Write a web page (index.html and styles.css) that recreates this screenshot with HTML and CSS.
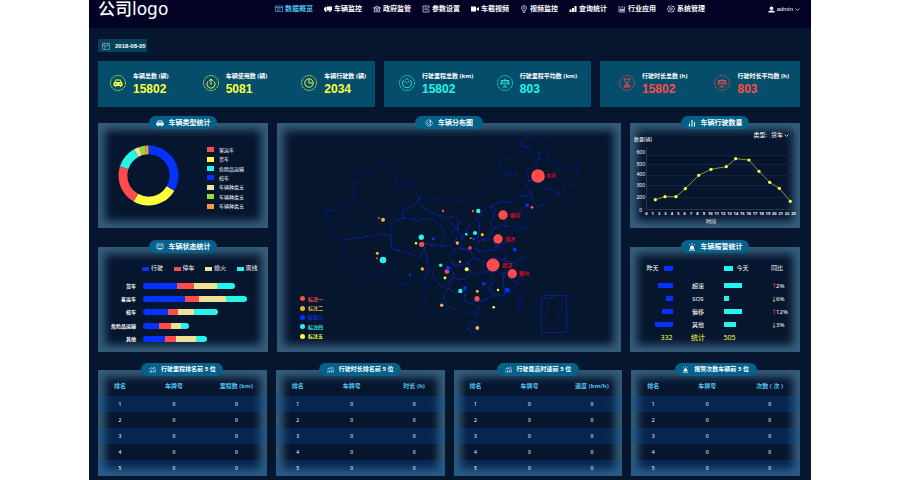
FILE: index.html
```html
<!DOCTYPE html>
<html lang="zh-CN">
<head>
	<title>数据概览</title>
	<meta charset="UTF-8">
	<link rel="stylesheet" href="styles.css">
</head>
<body>
<!-- icons -->
<svg class="sprite" aria-hidden="true">
	<symbol id="i-board" viewBox="0 0 16 16"><path d="M1 2h14v11H1zM1 5h14M4 8h8M4 10.500h5" fill="none" stroke="currentColor" stroke-width="1.300"/></symbol>
	<symbol id="i-truck" viewBox="0 0 16 16"><path d="M6 3h10v8H6zM0 7l2-3h3v7H0z" fill="currentColor"/><circle cx="3.500" cy="12" r="1.800" fill="currentColor"/><circle cx="12" cy="12" r="1.800" fill="currentColor"/></symbol>
	<symbol id="i-bank" viewBox="0 0 16 16"><path d="M1 6l7-4 7 4zM3 7v5M6.500 7v5M9.500 7v5M13 7v5M1 13.500h14" fill="none" stroke="currentColor" stroke-width="1.400"/></symbol>
	<symbol id="i-edit" viewBox="0 0 16 16"><path d="M14 9v5H2V2h12v4M5 6h6M5 9h3M8 11l5-4" fill="none" stroke="currentColor" stroke-width="1.300"/></symbol>
	<symbol id="i-video" viewBox="0 0 16 16"><path d="M0 3h10v10H0zM11 7l5-3v8l-5-3z" fill="currentColor"/></symbol>
	<symbol id="i-cam" viewBox="0 0 16 16"><path d="M8 1a5 5 0 0 1 3 9l-1 2H6l-1-2a5 5 0 0 1 3-9zM5 14.500h6" fill="none" stroke="currentColor" stroke-width="1.300"/><circle cx="8" cy="6" r="2" fill="none" stroke="currentColor"/></symbol>
	<symbol id="i-bars" viewBox="0 0 16 16"><path d="M1 9h4v5H1zM6 6h4v8H6zM11 2h4v12h-4z" fill="currentColor"/></symbol>
	<symbol id="i-app" viewBox="0 0 16 16"><path d="M2 2v12h13M5 8h2v4H5zM9 8h2v4H9zM13 3v9M5 4h6" fill="none" stroke="currentColor" stroke-width="1.300"/></symbol>
	<symbol id="i-gear" viewBox="0 0 16 16"><path d="M8 1l2 2 3-.5.5 3L15.500 8l-2 2.500-.5 3-3-.5-2 2-2-2-3 .5-.5-3L.5 8l2-2.500.5-3 3 .5z" fill="none" stroke="currentColor" stroke-width="1.400"/><circle cx="8" cy="8" r="2.500" fill="none" stroke="currentColor" stroke-width="1.400"/></symbol>
	<symbol id="i-user" viewBox="0 0 16 16"><circle cx="8" cy="5" r="4" fill="currentColor"/><path d="M1 15v-3l4-2h6l4 2v3z" fill="currentColor"/></symbol>
	<symbol id="i-down" viewBox="0 0 16 16"><path d="M2 5l6 6 6-6" fill="none" stroke="currentColor" stroke-width="2.500"/></symbol>
	<symbol id="i-date" viewBox="0 0 16 16"><path d="M1 3h14v12H1zM1 7h14M4.500 1v4M11.500 1v4M4 10h5M4 12.500h3" fill="none" stroke="currentColor" stroke-width="1"/></symbol>
	<symbol id="i-car" viewBox="0 0 16 16"><path d="M4 3h8l2 4 1.500 1v5H13v1.500h-2V13H5v1.500H3V13H.5V8L2 7zM4.800 4.500L4 7h8l-.8-2.500zM3 9v1.500h2V9zM11 9v1.500h2V9z" fill="currentColor" fill-rule="evenodd"/></symbol>
	<symbol id="i-screen" viewBox="0 0 16 16"><path d="M2 2h12v9H2zM5 15l3-4 3 4M4 8l3-3 2 2 3-3" fill="none" stroke="currentColor" stroke-width="1.300"/></symbol>
	<symbol id="i-globe" viewBox="0 0 16 16"><circle cx="8" cy="8" r="6.500" fill="none" stroke="currentColor" stroke-width="1.200" stroke-dasharray="3 1"/><path d="M3 5l4 4-3 3M8 14l2-4 3 1" fill="none" stroke="currentColor" stroke-width="1.200"/><path d="M9 3h3v4H9z" fill="currentColor"/></symbol>
	<symbol id="i-chart" viewBox="0 0 16 16"><path d="M3 9v6M8 2v13M13 6v9" fill="none" stroke="currentColor" stroke-width="2.200"/></symbol>
	<symbol id="i-alarm" viewBox="0 0 16 16"><path d="M4 12V9a4 4 0 0 1 8 0v3zM2 13h12v2H2z" fill="currentColor"/><path d="M8 0v3M2 2l2 2M14 2l-2 2" stroke="currentColor" stroke-width="1.300"/></symbol>
	<symbol id="i-rank" viewBox="0 0 16 16"><path d="M2 11v4M6 9v6M10 10v5M14 6v9M1 7l5-3 3 2 5-4" fill="none" stroke="currentColor" stroke-width="1.600"/></symbol>
	<!-- round icons -->
	<symbol id="r-ring" viewBox="0 0 32 32"><circle cx="16" cy="16" r="15" fill="none" stroke="currentColor" stroke-width="1.300" stroke-dasharray="5 1"/></symbol>
	<symbol id="r-car" viewBox="0 0 32 32"><use href="#r-ring"/><path d="M11 9h10l2 5 2 2v6h-3v2h-2v-2h-8v2h-2v-2H7v-6l2-2zM12 11l-1 3h10l-1-3zM10 17v2h3v-2zM19 17v2h3v-2z" fill="currentColor" fill-rule="evenodd"/></symbol>
	<symbol id="r-up" viewBox="0 0 32 32"><use href="#r-ring"/><path d="M16 20V8M12 12l4-4 4 4M10 13a8 8 0 1 0 12 0" fill="none" stroke="currentColor" stroke-width="1.800"/></symbol>
	<symbol id="r-pie" viewBox="0 0 32 32"><use href="#r-ring"/><circle cx="16" cy="16" r="8.500" fill="none" stroke="currentColor" stroke-width="1.800"/><path d="M16 8v8h8" fill="none" stroke="currentColor" stroke-width="1.800"/></symbol>
	<symbol id="r-gauge" viewBox="0 0 32 32"><use href="#r-ring"/><path d="M11 9a9 9 0 1 0 10 0M16 17l-4-5M16 6v4M20 12l-2 2" fill="none" stroke="currentColor" stroke-width="1.800"/></symbol>
	<symbol id="r-scale" viewBox="0 0 32 32"><use href="#r-ring"/><path d="M16 7v16M11 24h10M8 11h16M10 11l-3 7h6zM22 11l-3 7h6z" fill="none" stroke="currentColor" stroke-width="1.700"/></symbol>
	<symbol id="r-glass" viewBox="0 0 32 32"><use href="#r-ring"/><path d="M9 8h14M9 24h14M11 8c0 5 3 6 5 8 2-2 5-3 5-8M11 24c0-5 3-6 5-8 2 2 5 3 5 8M13 22l3-3 3 3z" fill="none" stroke="currentColor" stroke-width="1.800"/></symbol>
</svg>

<div class="page">
	<header class="header">
		<h1 class="logo">公司logo</h1>
		<nav class="nav">
			<a href="#" class="on"><svg class="icon"><use href="#i-board"/></svg>数据概览</a>
			<a href="#"><svg class="icon"><use href="#i-truck"/></svg>车辆监控</a>
			<a href="#"><svg class="icon"><use href="#i-bank"/></svg>政府监管</a>
			<a href="#"><svg class="icon"><use href="#i-edit"/></svg>参数设置</a>
			<a href="#"><svg class="icon"><use href="#i-video"/></svg>车载视频</a>
			<a href="#"><svg class="icon"><use href="#i-cam"/></svg>视频监控</a>
			<a href="#"><svg class="icon"><use href="#i-bars"/></svg>查询统计</a>
			<a href="#"><svg class="icon"><use href="#i-app"/></svg>行业应用</a>
			<a href="#"><svg class="icon"><use href="#i-gear"/></svg>系统管理</a>
		</nav>
		<button type="button" class="user"><svg class="icon"><use href="#i-user"/></svg>admin<svg class="arrow"><use href="#i-down"/></svg></button>
	</header>

	<main class="main">
		<label class="date"><svg class="icon"><use href="#i-date"/></svg><input type="text" value="2018-08-05" aria-label="日期"></label>

		<section class="cards">
			<div class="card yellow">
				<div class="item"><svg><use href="#r-car"/></svg><div><p>车辆总数 (辆)</p><b>15802</b></div></div>
				<div class="item"><svg><use href="#r-up"/></svg><div><p>车辆使用数 (辆)</p><b>5081</b></div></div>
				<div class="item"><svg><use href="#r-pie"/></svg><div><p>车辆行驶数 (辆)</p><b>2034</b></div></div>
			</div>
			<div class="card cyan">
				<div class="item"><svg><use href="#r-gauge"/></svg><div><p>行驶里程总数 (km)</p><b>15802</b></div></div>
				<div class="item"><svg><use href="#r-scale"/></svg><div><p>行驶里程平均数 (km)</p><b>803</b></div></div>
			</div>
			<div class="card red">
				<div class="item"><svg><use href="#r-glass"/></svg><div><p>行驶时长总数 (h)</p><b>15802</b></div></div>
				<div class="item"><svg><use href="#r-scale"/></svg><div><p>行驶时长平均数 (h)</p><b>803</b></div></div>
			</div>
		</section>

		<section class="charts">
			<div class="side">
				<div class="panel">
					<h2><svg class="icon"><use href="#i-car"/></svg>车辆类型统计</h2>
					<div class="type">
						<svg class="donut" viewBox="0 0 62 62">
							<g fill="none" stroke-width="9" transform="rotate(-90 31 31)">
								<circle cx="31" cy="31" r="26" pathLength="360" stroke="#0433ff" stroke-dasharray="121 239"/>
								<circle cx="31" cy="31" r="26" pathLength="360" stroke="#ffff3c" stroke-dasharray="89 271" stroke-dashoffset="-121"/>
								<circle cx="31" cy="31" r="26" pathLength="360" stroke="#ff4b4b" stroke-dasharray="78 282" stroke-dashoffset="-210"/>
								<circle cx="31" cy="31" r="26" pathLength="360" stroke="#25f5e8" stroke-dasharray="43 317" stroke-dashoffset="-288"/>
								<circle cx="31" cy="31" r="26" pathLength="360" stroke="#f0e199" stroke-dasharray="11 349" stroke-dashoffset="-331"/>
								<circle cx="31" cy="31" r="26" pathLength="360" stroke="#98d938" stroke-dasharray="11 349" stroke-dashoffset="-342"/>
								<circle cx="31" cy="31" r="26" pathLength="360" stroke="#f59a47" stroke-dasharray="7 353" stroke-dashoffset="-353"/>
							</g>
						</svg>
						<ul class="legend">
							<li><i class="c-red"></i>客运车</li>
							<li><i class="c-yellow"></i>货车</li>
							<li><i class="c-cyan"></i>危险品运输</li>
							<li><i class="c-blue"></i>校车</li>
							<li><i class="c-khaki"></i>车辆种类五</li>
							<li><i class="c-green"></i>车辆种类五</li>
							<li><i class="c-orange"></i>车辆种类五</li>
						</ul>
					</div>
				</div>
				<div class="panel">
					<h2><svg class="icon"><use href="#i-screen"/></svg>车辆状态统计</h2>
					<div class="status">
						<ul class="keys">
							<li><i class="c-blue"></i>行驶</li>
							<li><i class="c-red"></i>停车</li>
							<li><i class="c-khaki"></i>熄火</li>
							<li><i class="c-cyan"></i>离线</li>
						</ul>
						<ul class="rows">
							<li><span>货车</span><div><div class="bar" style="width:81%"><i class="c-blue" style="flex:34"></i><i class="c-red" style="flex:17"></i><i class="c-khaki" style="flex:23"></i><i class="c-cyan" style="flex:18"></i></div></div></li>
							<li><span>客运车</span><div><div class="bar" style="width:92%"><i class="c-blue" style="flex:42"></i><i class="c-red" style="flex:14"></i><i class="c-khaki" style="flex:27"></i><i class="c-cyan" style="flex:21"></i></div></div></li>
							<li><span>校车</span><div><div class="bar" style="width:66%"><i class="c-blue" style="flex:25"></i><i class="c-red" style="flex:10"></i><i class="c-khaki" style="flex:16"></i><i class="c-cyan" style="flex:23"></i></div></div></li>
							<li><span>危险品运输</span><div><div class="bar" style="width:41%"><i class="c-blue" style="flex:16"></i><i class="c-red" style="flex:12"></i><i class="c-khaki" style="flex:10"></i><i class="c-cyan" style="flex:8"></i></div></div></li>
							<li><span>其他</span><div><div class="bar" style="width:57%"><i class="c-blue" style="flex:22"></i><i class="c-red" style="flex:11"></i><i class="c-khaki" style="flex:20"></i><i class="c-cyan" style="flex:11"></i></div></div></li>
						</ul>
					</div>
				</div>
			</div>

			<div class="panel">
				<h2><svg class="icon"><use href="#i-globe"/></svg>车辆分布图</h2>
				<svg class="map" viewBox="277 129 344 223">
					<filter id="rough" x="-5%" y="-5%" width="110%" height="110%">
						<feTurbulence type="fractalNoise" baseFrequency="0.25" numOctaves="2" seed="4"/>
						<feDisplacementMap in="SourceGraphic" scale="4" xChannelSelector="R" yChannelSelector="G"/>
					</filter>
					<g fill="none" stroke="#0a22a6" stroke-width="0.900" stroke-linejoin="round" filter="url(#rough)">
						<!-- border -->
						<path stroke="#081c74" d="M382 162L373 173 362 174 360 183 352 184 354 195 351 203 342 208 327 211 325 218 330 227 335 235 343 240 346 248 347 260 357 268 372 278 388 279 403 285 415 282 425 278 428 288 424 298 425 308 435 316 442 312 450 307 463 313 477 314 487 310 500 303 512 293 518 283 525 270 523 258 513 247 508 242 507 237 515 230 527 228 517 225 508 227 503 218 512 215 518 210 522 215 527 218 540 207 550 199 563 193 565 187 573 184 579 165 563 169 557 161 548 157 547 147 540 139 528 137 518 142 523 149 513 157 500 162 500 169 517 175 503 175 497 182 483 186 482 194 467 200 450 203 438 199 418 197 415 189 408 184 395 184 396 174 387 165z"/>
						<!-- provinces -->
						<path d="M343 240L358 238 375 235 390 234 392 222 402 218 403 210 417 204 418 197"/>
						<path d="M402 218L418 220 432 219 442 227 446 235 440 246 430 244 424 243 425 252 418 258 405 252 392 248 391 234"/>
						<path d="M418 197L425 209 438 215 448 219 455 227 451 234 457 239 449 246 440 246M425 252L429 268 425 278M429 268L437 282 443 288 448 282 455 275 449 266"/>
						<path d="M448 219L453 216 459 222 457 230 463 238 470 225 478 218 484 210 493 206 500 201 513 203 520 197 530 194M463 238L460 248 452 252 449 258 456 266 468 263 474 258 470 250 460 248"/>
						<path d="M518 142L530 149 533 155 540 151 539 160 534 166 527 172 529 180 525 185 532 193 530 194 532 200 540 207M528 180L538 182 546 188 556 192 563 193"/>
						<path d="M493 206L495 214 490 222 494 229 488 238 478 241 480 220M494 229L503 224 508 227M488 238L498 246 508 242M478 241L474 250 482 252 492 250 498 246 506 252 504 260 514 263 523 258"/>
						<path d="M474 258L484 262 495 258 504 260M468 263L470 272 478 274 490 270 504 273 512 266M470 272L462 280 452 278 449 288 454 293 465 292 468 284M490 270L493 278 490 290 493 295 484 300 478 310 476 316"/>
						<path d="M504 273L503 285 505 295 493 295M449 288L443 294 445 303 450 307M465 292L464 300 470 304 484 300M504 273L512 280 518 283"/>
						<ellipse cx="474" cy="328" rx="5" ry="5"/>
						<ellipse cx="520" cy="303" rx="2" ry="8" stroke="#081c74"/>
					</g>
					<path d="M541.500 295.500h25v37h-25zM543 296l4 3 9-3M548 302v5M547 312l-2 6M562 303v6M560 314l-3 6M550 328l4-3M566 296l-4 4" fill="none" stroke="#0a1f96" stroke-width="0.900"/>
					<g fill="#ff4b4b">
						<circle cx="538" cy="176" r="6.800"/><circle cx="503" cy="215" r="4.700"/><circle cx="498" cy="239" r="4.700"/><circle cx="493" cy="265" r="6.500"/><circle cx="512.300" cy="273.700" r="4.600"/>
						<circle cx="443" cy="211" r="1.200"/><circle cx="379" cy="218" r="1"/><circle cx="421.700" cy="244.300" r="2.600"/><circle cx="377" cy="258.300" r="1"/><circle cx="447" cy="271.500" r="2.300"/><circle cx="532" cy="207.300" r="1.500"/><circle cx="473" cy="211" r="1.200"/><circle cx="470" cy="247.700" r="1.700"/><circle cx="477" cy="298.700" r="2.600"/>
					</g>
					<g fill="#edb63a">
						<circle cx="383" cy="219.700" r="2"/><circle cx="377.300" cy="253.300" r="1.500"/><circle cx="422.300" cy="269" r="1.700"/><circle cx="441.700" cy="305.300" r="1.700"/><circle cx="482.300" cy="234.700" r="1.600"/><circle cx="457.300" cy="243" r="1.700"/><circle cx="460" cy="261.700" r="1.200"/><circle cx="477.300" cy="291.300" r="1.500"/><circle cx="477.300" cy="328" r="1.900"/>
					</g>
					<g fill="#0433ff">
						<circle cx="433.300" cy="238.700" r="1.500"/><circle cx="410" cy="275" r="1.200"/><circle cx="448" cy="268.300" r="2.200"/><circle cx="527.300" cy="205.300" r="1.800"/><circle cx="473.700" cy="239" r="1.300"/><circle cx="514.700" cy="249.700" r="1.900"/><circle cx="483.700" cy="283.700" r="1.800"/><circle cx="464.700" cy="288" r="1.700"/><circle cx="507.300" cy="290.300" r="2.500"/>
					</g>
					<g fill="#25f5e8">
						<circle cx="421.300" cy="237.300" r="2.700"/><circle cx="383" cy="260" r="3.300"/><circle cx="440.700" cy="265.300" r="1.700"/><circle cx="478.300" cy="211" r="2.200"/><circle cx="466.300" cy="234.300" r="1.300"/><circle cx="475" cy="233" r="2.100"/><circle cx="460.300" cy="291" r="2.200"/>
					</g>
					<g fill="#ffff3c">
						<circle cx="416" cy="243.300" r="1.200"/><circle cx="445" cy="278" r="1.400"/><circle cx="470.700" cy="238.300" r="0.800"/><circle cx="466.700" cy="269.300" r="2"/><circle cx="498" cy="290" r="1.200"/><circle cx="493.700" cy="307.300" r="1.300"/>
					</g>
					<g class="city">
						<text x="546" y="177">大庆</text>
						<text x="510" y="217">廊坊</text>
						<text x="505" y="241">菏泽</text>
						<text x="502" y="267">武汉</text>
						<text x="519" y="275">衢州</text>
					</g>
				</svg>
				<ul class="marks">
					<li class="t-red">标注一</li>
					<li class="t-gold">标注二</li>
					<li class="t-blue">标注三</li>
					<li class="t-cyan">标注四</li>
					<li class="t-yellow">标注五</li>
				</ul>
			</div>

			<div class="side">
				<div class="panel">
					<h2><svg class="icon"><use href="#i-chart"/></svg>车辆行驶数量</h2>
					<div class="kind"><label for="kind">类型:</label><select id="kind"><option>货车</option><option>客运车</option><option>校车</option></select><svg class="arrow"><use href="#i-down"/></svg></div>
					<svg class="line" viewBox="630 129 170 99">
						<path d="M646.500 155.500H793M646.500 164.500H793M646.500 175.500H793M646.500 185.500H793M646.500 197.500H793" stroke="#13233f" fill="none"/>
						<path d="M646.500 147V209.500H793" stroke="#26364f" fill="none"/>
						<text x="634" y="141">数量(辆)</text>
						<g text-anchor="end">
							<text x="645" y="154">600</text><text x="645" y="166">500</text><text x="645" y="176">400</text><text x="645" y="187">300</text><text x="645" y="199">200</text><text x="642" y="212">0</text>
						</g>
						<g class="hours" text-anchor="middle">
							<text x="646.300" y="215">0</text><text x="652.700" y="215">1</text><text x="659.100" y="215">2</text><text x="665.500" y="215">3</text><text x="671.900" y="215">4</text><text x="678.300" y="215">5</text><text x="684.700" y="215">6</text><text x="691.100" y="215">7</text><text x="697.500" y="215">8</text><text x="703.900" y="215">9</text><text x="710.300" y="215">10</text><text x="716.700" y="215">11</text><text x="723.100" y="215">12</text><text x="729.500" y="215">13</text><text x="735.900" y="215">14</text><text x="742.300" y="215">15</text><text x="748.700" y="215">16</text><text x="755.100" y="215">17</text><text x="761.500" y="215">18</text><text x="767.900" y="215">19</text><text x="774.300" y="215">20</text><text x="780.700" y="215">21</text><text x="787.100" y="215">22</text><text x="793.500" y="215">23</text>
						</g>
						<text x="706" y="223">时间</text>
						<path d="M655.300 199.700L665 196.700 676 196.700 685.300 188.700 698.700 175.300 711 169.300 726.300 166.700 735.700 158.700 749 160 759 171.300 769.700 182.300 779.300 188.300 790.300 201.300" fill="none" stroke="#a9ab3c" stroke-width="0.800"/>
						<g fill="#ffff3c">
							<circle cx="655.300" cy="199.700" r="1.600"/><circle cx="665" cy="196.700" r="1.600"/><circle cx="676" cy="196.700" r="1.600"/><circle cx="685.300" cy="188.700" r="1.600"/><circle cx="698.700" cy="175.300" r="1.600"/><circle cx="711" cy="169.300" r="1.600"/><circle cx="726.300" cy="166.700" r="1.600"/><circle cx="735.700" cy="158.700" r="1.600"/><circle cx="749" cy="160" r="1.600"/><circle cx="759" cy="171.300" r="1.600"/><circle cx="769.700" cy="182.300" r="1.600"/><circle cx="779.300" cy="188.300" r="1.600"/><circle cx="790.300" cy="201.300" r="1.600"/>
						</g>
					</svg>
				</div>
				<div class="panel">
					<h2><svg class="icon"><use href="#i-alarm"/></svg>车辆报警统计</h2>
					<table class="alarm">
						<thead>
							<tr><th>昨天<i class="c-blue"></i></th><th></th><th><i class="c-cyan"></i>今天</th><th>同比</th></tr>
						</thead>
						<tbody>
							<tr><td><i class="c-blue" style="width:15px"></i></td><td>超速</td><td><i class="c-cyan" style="width:18px"></i></td><td><em class="up">↑</em>2%</td></tr>
							<tr><td><i class="c-blue" style="width:7px"></i></td><td>SOS</td><td><i class="c-cyan" style="width:5px"></i></td><td><em class="down">↓</em>6%</td></tr>
							<tr><td><i class="c-blue" style="width:11px"></i></td><td>偏移</td><td><i class="c-cyan" style="width:18px"></i></td><td><em class="up">↑</em>12%</td></tr>
							<tr><td><i class="c-blue" style="width:18px"></i></td><td>其他</td><td><i class="c-cyan" style="width:12px"></i></td><td><em class="down">↓</em>3%</td></tr>
						</tbody>
						<tfoot>
							<tr><td>332</td><td>统计</td><td>505</td><td></td></tr>
						</tfoot>
					</table>
				</div>
			</div>
		</section>

		<section class="ranks">
			<div class="panel">
				<h2><svg class="icon"><use href="#i-rank"/></svg>行驶里程排名前 5 位</h2>
				<table class="rank">
					<thead><tr><th>排名</th><th>车牌号</th><th>里程数 (km)</th></tr></thead>
					<tbody>
						<tr><td>1</td><td>0</td><td>0</td></tr>
						<tr><td>2</td><td>0</td><td>0</td></tr>
						<tr><td>3</td><td>0</td><td>0</td></tr>
						<tr><td>4</td><td>0</td><td>0</td></tr>
						<tr><td>5</td><td>0</td><td>0</td></tr>
					</tbody>
				</table>
			</div>
			<div class="panel">
				<h2><svg class="icon"><use href="#i-rank"/></svg>行驶时长排名前 5 位</h2>
				<table class="rank">
					<thead><tr><th>排名</th><th>车牌号</th><th>时长 (h)</th></tr></thead>
					<tbody>
						<tr><td>1</td><td>0</td><td>0</td></tr>
						<tr><td>2</td><td>0</td><td>0</td></tr>
						<tr><td>3</td><td>0</td><td>0</td></tr>
						<tr><td>4</td><td>0</td><td>0</td></tr>
						<tr><td>5</td><td>0</td><td>0</td></tr>
					</tbody>
				</table>
			</div>
			<div class="panel">
				<h2><svg class="icon"><use href="#i-rank"/></svg>行驶最高时速前 5 位</h2>
				<table class="rank">
					<thead><tr><th>排名</th><th>车牌号</th><th>速度 (km/h)</th></tr></thead>
					<tbody>
						<tr><td>1</td><td>0</td><td>0</td></tr>
						<tr><td>2</td><td>0</td><td>0</td></tr>
						<tr><td>3</td><td>0</td><td>0</td></tr>
						<tr><td>4</td><td>0</td><td>0</td></tr>
						<tr><td>5</td><td>0</td><td>0</td></tr>
					</tbody>
				</table>
			</div>
			<div class="panel">
				<h2><svg class="icon"><use href="#i-alarm"/></svg>报警次数车辆前 5 位</h2>
				<table class="rank">
					<thead><tr><th>排名</th><th>车牌号</th><th>次数 ( 次 )</th></tr></thead>
					<tbody>
						<tr><td>1</td><td>0</td><td>0</td></tr>
						<tr><td>2</td><td>0</td><td>0</td></tr>
						<tr><td>3</td><td>0</td><td>0</td></tr>
						<tr><td>4</td><td>0</td><td>0</td></tr>
						<tr><td>5</td><td>0</td><td>0</td></tr>
					</tbody>
				</table>
			</div>
		</section>
	</main>
</div>
</body>
</html>
```

FILE: styles.css
```css
*{margin: 0;padding: 0;box-sizing: border-box;}
body
{
	padding: 0 89px;background: #fff;color: #fff;font-family: "Noto Sans","Noto Sans CJK SC",sans-serif;font-size: 6px;line-height: 8px;
}
ul{list-style: none;}
a{color: inherit;text-decoration: none;}
i,em{font-style: normal;}
button,input,select{border: 0;background: none;color: inherit;font: inherit;}
table{width: 100%;border-collapse: collapse;table-layout: fixed;}
.sprite{position: absolute;width: 0;height: 0;}
.icon{width: 8px;height: 8px;flex: none;}
.arrow{width: 5px;height: 5px;flex: none;}
.page{min-height: 100vh;background: #07162f;}

/* header */
.header
{
	display: flex;align-items: center;height: 28px;padding: 0 11px 10px 9px;background: #020225;
}
.logo{width: 177px;font-family: "DejaVu Sans","Noto Sans CJK SC",sans-serif;font-size: 17px;line-height: 18px;font-weight: 500;}
.nav{display: flex;gap: 11px;font-size: 7px;font-weight: bold;white-space: nowrap;}
.nav a{display: flex;align-items: center;gap: 2px;}
.nav .on{color: #4fc3ea;}
.user{display: flex;align-items: center;gap: 2px;margin-left: auto;font-family: "Liberation Sans",sans-serif;font-size: 6px;}
.user .icon{width: 7px;height: 7px;}

.main{padding: 11px 11px 4px 9px;}
.date{display: flex;align-items: center;gap: 5px;width: 49px;height: 13px;padding: 0 4px;background: #05405c;}
.date .icon{color: #b5cdd8;}
.date input{width: 32px;font-family: "Liberation Sans",sans-serif;font-size: 6px;font-weight: bold;}

/* cards */
.cards{display: grid;grid-template-columns: 277fr 207fr 200fr;gap: 9px;margin-top: 9px;}
.card{display: flex;justify-content: space-between;height: 46px;padding: 10px 9px 0 12px;background: #044e6b;}
.card.cyan{padding: 10px 14px 0 15px;}
.card.red{padding: 10px 11px 0 19px;}
.item{display: flex;gap: 7px;white-space: nowrap;}
.item svg{width: 16px;height: 16px;margin-top: 4px;}
.item p{font-size: 6px;line-height: 10px;font-weight: bold;}
.item b{display: block;font-family: "Liberation Sans",sans-serif;font-size: 12px;line-height: 17px;}
.yellow svg,.yellow b{color: #ffff3c;}
.cyan svg,.cyan b{color: #25f5e8;}
.red svg,.red b{color: #ff4b4b;}

/* panels */
.charts{display: grid;grid-template-columns: 170fr 344fr 170fr;gap: 9px;margin-top: 16px;}
.side{display: flex;flex-direction: column;gap: 19px;min-width: 0;}
.panel{position: relative;min-width: 0;min-height: 105px;box-shadow: inset 0 0 8px 7px #365f7c;}
.panel h2
{
	display: flex;align-items: center;justify-content: center;gap: 5px;width: 68px;height: 13px;margin: -7px auto 0;border-radius: 7px;background: #04618a;font-size: 7px;line-height: 13px;white-space: nowrap;
}
.c-red{background: #ff4b4b;}
.c-yellow{background: #ffff3c;}
.c-cyan{background: #25f5e8;}
.c-blue{background: #0433ff;}
.c-khaki{background: #f0e199;}
.c-green{background: #98d938;}
.c-orange{background: #f59a47;}

.type{display: flex;justify-content: space-between;padding: 16px 24px 0 20px;font-size: 5px;}
.donut{width: 61px;height: 61px;}
.legend{display: grid;grid-auto-rows: 1fr;height: 66px;}
.legend li{display: flex;align-items: center;gap: 5px;}
.legend i{width: 7px;height: 5px;}

.status{padding: 12px 12px 0;}
.keys{display: grid;grid-template-columns: repeat(4,1fr);padding-left: 32px;margin-right: -12px;line-height: 7px;}
.keys li{display: flex;align-items: center;gap: 2px;}
.keys i{width: 7px;height: 4px;}
.rows{display: grid;grid-auto-rows: 1fr;height: 67px;margin-top: 7px;font-size: 5px;font-weight: bold;}
.rows li{display: grid;grid-template-columns: 26px 1fr;align-items: center;gap: 7px;text-align: right;white-space: nowrap;}
.bar{display: flex;height: 6px;border-radius: 3px;overflow: hidden;}

.map,.line{display: block;width: 100%;}
.city{fill: #d80a20;font-size: 5px;font-weight: bold;}
.marks{position: absolute;left: 23px;bottom: 11px;display: grid;grid-auto-rows: 1fr;height: 47px;font-size: 5px;font-weight: bold;}
.marks li{display: flex;align-items: center;gap: 3px;}
.marks li::before{content: "";width: 5px;height: 5px;border-radius: 50%;background: currentColor;}
.t-red{color: #ff4b4b;}
.t-gold{color: #edb63a;}
.t-blue{color: #0433ff;}
.t-cyan{color: #25f5e8;}
.t-yellow{color: #ffff3c;}

.line text{fill: #fff;font-size: 5px;}
.line .hours text{font-size: 4px;font-weight: bold;}
.kind{position: absolute;top: 8px;right: 7px;display: flex;align-items: center;gap: 2px;}
.kind select{width: 24px;padding-left: 1px;border: solid #1d2c45;border-width: 0 1px;appearance: none;}
.kind .arrow{margin-left: -11px;margin-right: 4px;pointer-events: none;}

.alarm{margin-top: 4px;}
.alarm th{height: 22px;font-weight: normal;}
.alarm td{height: 13px;text-align: center;}
.alarm th:nth-child(1){width: 25%;}
.alarm th:nth-child(2){width: 30%;}
.alarm th:nth-child(3){width: 28%;}
.alarm tr > :nth-child(1){text-align: right;}
.alarm tr > :nth-child(3),.alarm tr > :nth-child(4){text-align: left;}
.alarm i{display: inline-block;height: 5px;vertical-align: middle;}
.alarm th i{width: 9px;margin: 0 4px 0 0;}
.alarm th:first-child i{margin: 0 0 0 5px;}
.alarm em{display: inline-block;width: 5px;font-weight: bold;}
.alarm tfoot td{height: 14px;color: #ffff3c;font-size: 7px;}
.up{color: #ff1e1e;}
.down{color: #98d938;}

.ranks{display: grid;grid-template-columns: repeat(4,1fr);gap: 9px;margin-top: 18px;}
.ranks h2{width: 82px;font-size: 6px;}
.ranks .icon{width: 7px;height: 7px;}
.rank{text-align: center;}
.rank th{height: 20px;color: #52c3f0;font-size: 6px;}
.rank th:nth-child(1){width: 26%;}
.rank th:nth-child(2){width: 38%;}
.rank td{height: 16px;font-size: 5px;}
.rank tbody tr:nth-child(odd){background: rgba(3,86,175,.25);}
```
